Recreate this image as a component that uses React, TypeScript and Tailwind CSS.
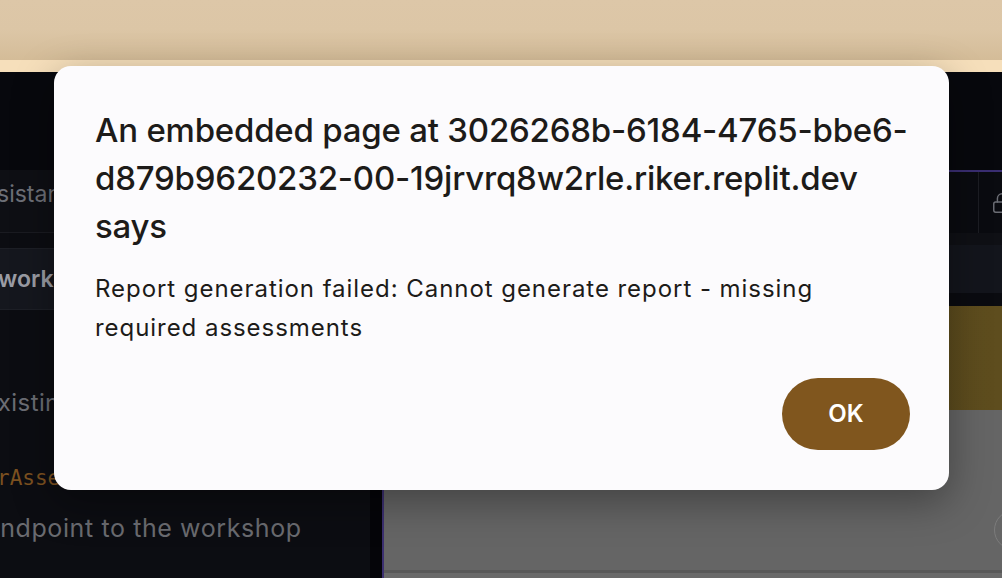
import { Lock } from 'lucide-react';

const font = { fontFamily: 'Inter, "Noto Sans", sans-serif' };

function Sidebar() {
  return (
    <div className="w-[370px] flex flex-col bg-[#0c0d12] overflow-hidden">
      <div className="h-[98px] bg-[#07080d]" />
      {/* tab row */}
      <div className="h-[63px] bg-[#0e0f14] border-b border-[#1a1b21] pt-[8px] overflow-hidden whitespace-nowrap">
        <span className="block -ml-[31px] text-[23px] leading-[32px] text-[#6d6f77]">Assistant</span>
      </div>
      <div className="h-[15px]" />
      <div className="h-[62px] bg-[#15171e] border-y border-[#1d1f26] flex items-center overflow-hidden whitespace-nowrap">
        <span className="-ml-[2px] text-[23px] font-semibold text-[#9a9ca4]">workshop</span>
      </div>
      {/* chat text */}
      <div className="h-[78px]" />
      <div className="h-[30px] overflow-hidden whitespace-nowrap">
        <span className="block -ml-[16px] text-[24px] leading-[30px] tracking-[0.4px] text-[#6b6d74]">existing</span>
      </div>
      <div className="h-[45px]" />
      <div className="h-[30px] overflow-hidden whitespace-nowrap">
        <span
          className="block -ml-[3px] text-[21px] leading-[30px] text-[#7c5120]"
          style={{ fontFamily: '"DejaVu Sans Mono", monospace' }}
        >
          rAssessments
        </span>
      </div>
      <div className="h-[18px]" />
      <div className="h-[34px] overflow-hidden whitespace-nowrap">
        <span className="block -ml-[15px] text-[25px] leading-[34px] tracking-[0.6px] text-[#6a6b70]">endpoint to the workshop</span>
      </div>
    </div>
  );
}

function MainPane() {
  return (
    <div className="flex-1 flex flex-col overflow-hidden">
      <div className="h-[98px] bg-[#07080d]" />
      <div className="h-[2px] bg-[#3a2e72]" />
      <div className="h-[61px] bg-[#0a0b10] flex justify-end">
        <div className="w-[24px] border-l border-[#1c1d23] flex items-center pl-[12px] overflow-hidden">
          <Lock size={22} strokeWidth={1.6} className="text-[#6b6d74] shrink-0" />
        </div>
      </div>
      <div className="h-[12px] bg-[#0f1015]" />
      <div className="h-[48px] bg-[#13151c]" />
      <div className="h-[13px] bg-[#0a0b10]" />
      <div className="h-[104px] bg-gradient-to-r from-[#574719] to-[#5e4d1e]" />
      <div className="h-[160px] bg-[#656565] flex justify-end items-center">
        <div className="w-[40px] h-[40px] -mr-[32px] mt-[80px] rounded-full border border-[#7c7c7c]" />
      </div>
      <div className="h-[3px] bg-[#595959]" />
      <div className="flex-1 bg-[#6a6a6a]" />
    </div>
  );
}

export default function App() {
  return (
    <div className="relative w-[1002px] h-[578px] overflow-hidden bg-[#07080d]" style={font}>
      <div className="h-[60px] bg-gradient-to-b from-[#ddc7a8] via-[#dcc6a6] to-[#d4bc98]" />
      <div className="h-[12px] bg-[#f6dfbb]" />
      <div className="flex h-[506px]">
        <Sidebar />
        <div className="w-[12px] bg-[#050509]" />
        <div className="w-[2px] bg-[#3b2f70]" />
        <MainPane />
      </div>

      {/* alert dialog */}
      <div
        role="alertdialog"
        className="absolute left-[54px] top-[66px] w-[895px] h-[424px] rounded-[17px] bg-[#fcfbfd] pl-[41px] pr-[39px] pt-[40px] pb-[40px] flex flex-col shadow-[0_12px_40px_rgba(0,0,0,0.35)]"
      >
        <h1 className="text-[33px] leading-[48px] font-medium text-[#1d1b19] whitespace-nowrap tracking-[-0.22px]">
          An embedded page at 3026268b-6184-4765-bbe6-
          <br />
          d879b9620232-00-19jrvrq8w2rle.riker.replit.dev
          <br />
          says
        </h1>
        <p className="mt-[19px] text-[24px] leading-[39px] tracking-[0.95px] text-[#1d1b19] whitespace-nowrap">
          Report generation failed: Cannot generate report - missing
          <br />
          required assessments
        </p>
        <div className="mt-auto flex justify-end">
          <button className="w-[128px] h-[72px] rounded-full bg-[#80561e] text-white text-[24px] font-semibold">
            OK
          </button>
        </div>
      </div>
    </div>
  );
}
